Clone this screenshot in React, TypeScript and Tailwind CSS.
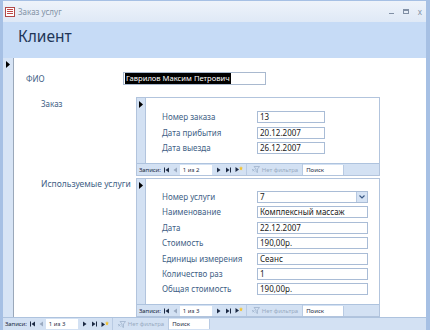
import React from "react";

const Tri = ({ cls = "" }: { cls?: string }) => (
  <svg width="4" height="7" viewBox="0 0 4 7" className={cls}>
    <path d="M0 0 L4 3.5 L0 7 Z" fill="#000" />
  </svg>
);

const First = ({ c = "#1d2b44" }: { c?: string }) => (
  <svg width="6" height="6" viewBox="0 0 6 6">
    <rect x="0" y="0.5" width="1" height="5" fill={c} />
    <path d="M5 0.5 L1.5 3 L5 5.5 Z" fill={c} />
  </svg>
);
const Prev = ({ c = "#1d2b44" }: { c?: string }) => (
  <svg width="5" height="6" viewBox="0 0 5 6">
    <path d="M4 0.5 L0.5 3 L4 5.5 Z" fill={c} />
  </svg>
);
const Next = ({ c = "#1d2b44" }: { c?: string }) => (
  <svg width="5" height="6" viewBox="0 0 5 6">
    <path d="M1 0.5 L4.5 3 L1 5.5 Z" fill={c} />
  </svg>
);
const Last = ({ c = "#1d2b44" }: { c?: string }) => (
  <svg width="6" height="6" viewBox="0 0 6 6">
    <path d="M1 0.5 L4.5 3 L1 5.5 Z" fill={c} />
    <rect x="5" y="0.5" width="1" height="5" fill={c} />
  </svg>
);
const New = () => (
  <svg width="8" height="7" viewBox="0 0 8 7">
    <path d="M0.5 1 L4 3.5 L0.5 6 Z" fill="#1d2b44" />
    <path d="M6 0 L6.6 1.6 L8 1.8 L6.9 2.8 L7.2 4.4 L6 3.5 L4.8 4.4 L5.1 2.8 L4 1.8 L5.4 1.6 Z" fill="#f2c230" />
  </svg>
);
const Filter = () => (
  <svg width="8" height="7" viewBox="0 0 8 7">
    <path d="M2 0.5 L7.5 0.5 L5.5 3 L5.5 6.5 L4 5.5 L4 3 Z" fill="none" stroke="#9fb2cb" strokeWidth="0.8" />
    <path d="M0 3 L2.5 5.5 M2.5 3 L0 5.5" stroke="#9fb2cb" strokeWidth="0.8" />
  </svg>
);

function NavBar({ pos, total, main = false }: { pos: number; total: number; main?: boolean }) {
  return (
    <div
      className={
        "flex items-center shrink-0 bg-[#d3e1f3] border-t border-[#aec3de] text-[6px] leading-none text-[#1d2b44] " +
        (main ? "h-[13px] pl-[2px]" : "h-[12px] pl-[2px]")
      }
    >
      <span className="tracking-[-0.1px]">Записи:</span>
      <span className="ml-[3px] flex items-center gap-[3px]">
        <First />
        <Prev c="#9aaac0" />
      </span>
      <div className="ml-[2px] h-[10px] w-[32px] bg-white flex items-center pl-[3px]">
        {pos} из {total}
      </div>
      <span className="ml-[4px] flex items-center gap-[4px]">
        <Next />
        <Last />
        <New />
      </span>
      <div className="ml-[3px] h-full w-px bg-[#b9cbe3]" />
      <span className="ml-[5px] flex items-center gap-[2px] text-[#9aabc2]">
        <Filter />
        <span>Нет фильтра</span>
      </span>
      <div className="ml-[4px] h-full w-px bg-[#b9cbe3]" />
      <div className="h-[10px] w-[41px] bg-white flex items-center pl-[3px] border-r border-[#b9cbe3]">
        Поиск
      </div>
    </div>
  );
}

function Field({ label, value, w, combo = false }: { label: string; value: string; w: number; combo?: boolean }) {
  return (
    <div className="flex items-center">
      <span className="w-[95px] text-[8px] leading-none text-[#425f86]">{label}</span>
      <div
        className="h-[12px] bg-white border border-[#a9bcd6] flex items-center pl-[2px] text-[8px] leading-none text-[#1a1a1a] relative"
        style={{ width: w }}
      >
        {value}
        {combo && (
          <div className="absolute right-0 top-0 h-full w-[11px] bg-[#d6e3f4] border-l border-[#b7c9e1] flex items-center justify-center">
            <svg width="6" height="4" viewBox="0 0 6 4">
              <path d="M0.5 0.5 L3 3 L5.5 0.5" fill="none" stroke="#3b5a86" strokeWidth="1.2" />
            </svg>
          </div>
        )}
      </div>
    </div>
  );
}

function SubForm({
  h,
  pt,
  gap,
  w,
  rows,
  pos,
  total,
}: {
  h: number;
  pt: number;
  gap: number;
  w: number;
  rows: { label: string; value: string; combo?: boolean }[];
  pos: number;
  total: number;
}) {
  return (
    <div className="w-[244px] border border-[#b2c4dd] flex flex-col bg-white" style={{ height: h }}>
      <div className="flex flex-1 min-h-0">
        <div className="w-[9px] bg-[#d3e1f3] border-r border-[#b2c4dd] flex justify-center pt-[3px]">
          <Tri />
        </div>
        <div className="flex-1 flex flex-col pl-[16px]" style={{ paddingTop: pt, gap }}>
          {rows.map((r) => (
            <Field key={r.label} label={r.label} value={r.value} w={w} combo={r.combo} />
          ))}
        </div>
      </div>
      <NavBar pos={pos} total={total} />
    </div>
  );
}

export default function App() {
  return (
    <div className="w-[430px] h-[330px] flex flex-col bg-[#9fbbe2] font-['Noto_Sans',sans-serif] overflow-hidden">
      {/* title bar */}
      <div className="h-[22px] shrink-0 flex items-center bg-gradient-to-b from-[#eef3fa] to-[#dfe9f6] border-l-[3px] border-r-[4px] border-t border-[#a6c0e4] border-b-0">
        <div className="ml-[2px] w-[10px] h-[10px] border border-[#b04a4a] bg-white flex flex-col justify-center gap-[1px] px-[1px]">
          <div className="h-[1px] bg-[#c04848]" />
          <div className="h-[1px] bg-[#c04848]" />
          <div className="h-[1px] bg-[#c04848]" />
        </div>
        <span className="ml-[3px] text-[8px] text-[#8392a6] leading-none">Заказ услуг</span>
        <div className="ml-auto mr-[4px] flex items-center gap-[9px] text-[#8190a5]">
          <div className="w-[5px] h-[1px] bg-[#8190a5] mt-[3px]" />
          <div className="w-[6px] h-[5px] border border-[#8190a5] border-t-2" />
          <span className="text-[8px] leading-none">x</span>
        </div>
      </div>
      {/* header */}
      <div className="h-[36px] shrink-0 bg-[#c6dbf6] border-l-[3px] border-r-[4px] border-[#a6c0e4] flex items-center pl-[15px]">
        <span className="text-[15.5px] leading-none text-[#1f3658] -mt-[6px]">Клиент</span>
      </div>
      {/* body */}
      <div className="h-[259px] shrink-0 flex border-l-[3px] border-r-[4px] border-[#a6c0e4] overflow-hidden">
        <div className="w-[11px] shrink-0 bg-[#d7e4f5] border-r border-[#9aa8ba] flex justify-center pt-[3px]">
          <Tri />
        </div>
        <div className="flex-1 bg-white flex flex-col pl-[12px]">
          <div className="flex items-center mt-[14px]">
            <span className="w-[97px] text-[8px] leading-none text-[#425f86]">ФИО</span>
            <div className="w-[143px] h-[13px] border border-[#a9b9cf] flex items-center pl-[1px]">
              <span className="bg-black text-white text-[7.6px] leading-[11px] px-px">Гаврилов Максим Петрович</span>
            </div>
          </div>
          <div className="flex mt-[12px]">
            <span className="w-[110px] pl-[15px] pt-[3px] text-[8px] leading-none text-[#425f86]">Заказ</span>
            <SubForm
              h={79}
              pt={13}
              gap={3.5}
              w={68}
              pos={1}
              total={2}
              rows={[
                { label: "Номер заказа", value: "13" },
                { label: "Дата прибытия", value: "20.12.2007" },
                { label: "Дата выезда", value: "26.12.2007" },
              ]}
            />
          </div>
          <div className="flex mt-[2px]">
            <span className="w-[110px] pl-[15px] pt-[2px] text-[8.5px] leading-none text-[#425f86]">Используемые услуги</span>
            <SubForm
              h={139}
              pt={12}
              gap={3.4}
              w={111}
              pos={1}
              total={3}
              rows={[
                { label: "Номер услуги", value: "7", combo: true },
                { label: "Наименование", value: "Комплексный массаж" },
                { label: "Дата", value: "22.12.2007" },
                { label: "Стоимость", value: "190,00р." },
                { label: "Единицы измерения", value: "Сеанс" },
                { label: "Количество раз", value: "1" },
                { label: "Общая стоимость", value: "190,00р." },
              ]}
            />
          </div>
        </div>
      </div>
      {/* main nav */}
      <div className="h-[13px] shrink-0 border-l-[3px] border-r-[4px] border-[#a6c0e4]">
        <NavBar pos={1} total={3} main />
      </div>
    </div>
  );
}
